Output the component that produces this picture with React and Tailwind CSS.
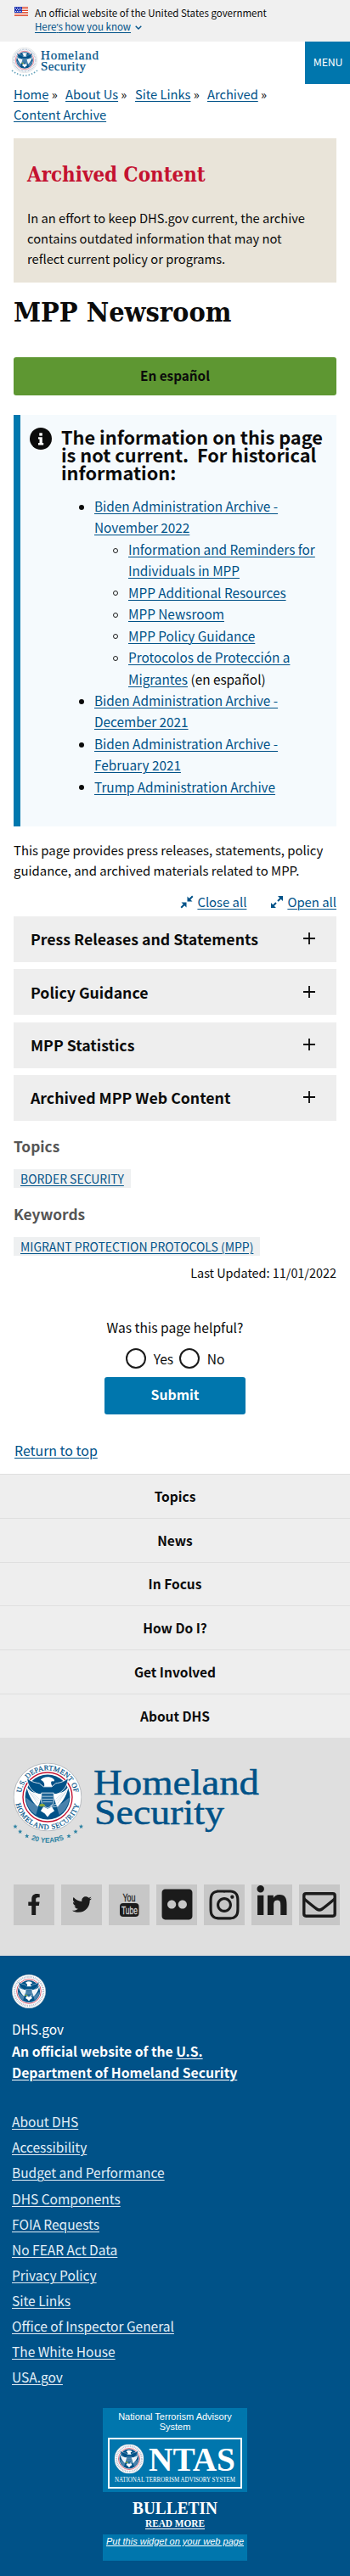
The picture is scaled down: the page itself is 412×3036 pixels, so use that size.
import React from "react";
import { FaFacebookF, FaTwitter, FaFlickr, FaInstagram, FaLinkedinIn } from "react-icons/fa";

const link = "text-[#005288] underline underline-offset-[2px] decoration-1";

function Seal({ className, ringText = true, id }) {
  return (
    <svg viewBox="0 0 100 100" className={className} aria-hidden="true">
      <defs>
        <path id={id + "-ring-top"} d="M 12.3 60 A 39 39 0 1 1 87.7 60" />
        <path id={id + "-ring-bottom"} d="M 3 50 A 47 47 0 0 0 97 50" />
      </defs>
      <circle cx="50" cy="50" r="49.3" fill="#ffffff" stroke="#b4b8bd" strokeWidth="1.2" />
      {ringText ? (
        <g fill="#005288" fontFamily="Liberation Serif, serif" fontSize="10.5" stroke="#005288" strokeWidth="0.25">
          <text letterSpacing="0.2">
            <textPath href={"#" + id + "-ring-top"} startOffset="50%" textAnchor="middle">U.S. DEPARTMENT OF</textPath>
          </text>
          <text letterSpacing="0.8">
            <textPath href={"#" + id + "-ring-bottom"} startOffset="50%" textAnchor="middle">HOMELAND SECURITY</textPath>
          </text>
        </g>
      ) : (
        <circle cx="50" cy="50" r="42.5" fill="none" stroke="#9fb0c6" strokeWidth="6" strokeDasharray="2 2.6" />
      )}
      <circle cx="50" cy="50" r="35.8" fill="#ffffff" stroke="#c41230" strokeWidth="1.7" />
      <circle cx="50" cy="50" r="32.6" fill="#005288" />
      <path d="M18.5 51 C24 54 28 60 37 63 L33 76 C25 71 19 62 18.5 51 Z M81.5 51 C76 54 72 60 63 63 L67 76 C75 71 81 62 81.5 51 Z" fill="#4a82ac" />
      <path d="M20 22 C21 34 27 42 37 46 L63 46 C73 42 79 34 80 22 C74 28 68 29 62 30 L56 35 L44 35 L38 30 C32 29 26 28 20 22 Z" fill="#005288" stroke="#ffffff" strokeWidth="1" />
      <path d="M19 33 C25 45 34 44 42 46 L38 60 L36 64 C31 60 23 52 19 33 Z M81 33 C75 45 66 44 58 46 L62 60 L64 64 C69 60 77 52 81 33 Z" fill="#ffffff" />
      <path d="M24 43 L37 56 M28 44 L38 53 M22 40 L36 60 M76 43 L63 56 M72 44 L62 53 M78 40 L64 60" stroke="#8fb3cd" strokeWidth=".5" />
      <path d="M40 25 C43 20 53 19 58 23 C61 25 60 28 57 27 C54 27 55 31 57 35 L45 35 C46 31 45 27 40 25 Z" fill="#ffffff" />
      <path d="M41 44 H59 V56 C59 61 54 64 50 66 C46 64 41 61 41 56 Z" fill="#1d6497" stroke="#ffffff" strokeWidth="1" />
      <path d="M42 49 H58 M42 53 H58 M43 57 H57" stroke="#b9d2e2" strokeWidth="1.1" />
      <path d="M44 64 L50 67 L56 64 L60 70 L54 74 L50 79 L46 74 L40 70 Z" fill="#ffffff" />
      <path d="M37 62 Q42 57 47 62 Q42 66 37 62 Z" fill="#8aa83c" />
      <path d="M54 63 L66 59 M54 65 L66 63" stroke="#ffffff" strokeWidth=".9" />
    </svg>
  );
}

function Stars({ points, r, fill }) {
  return points.map(([x, y]) => (
    <path
      key={x}
      transform={"translate(" + x + " " + y + ") scale(" + r + ")"}
      d="M0 -1 L0.27 -0.35 L0.95 -0.31 L0.42 0.13 L0.59 0.81 L0 0.44 L-0.59 0.81 L-0.42 0.13 L-0.95 -0.31 L-0.27 -0.35 Z"
      fill={fill}
    />
  ));
}

function Flag() {
  return (
    <svg viewBox="0 0 16 11" className="h-[11px] w-4" aria-hidden="true">
      <rect width="16" height="11" fill="#ffffff" />
      <path d="M0 .5H16M0 2.5H16M0 4.5H16M0 6.5H16M0 8.5H16M0 10.5H16" stroke="#db3e1f" strokeWidth="1" />
      <rect width="9" height="7" fill="#1e33b1" />
      <path d="M1 1.5H8.5M2 3.5H8.5M1 5.5H8.5" stroke="#ffffff" strokeWidth=".9" strokeDasharray="1 1" />
    </svg>
  );
}

function Banner() {
  return (
    <div className="flex h-[49px] gap-2 bg-[#f0f0f0] pl-[17px] pt-[7px] text-[11.5px] leading-4">
      <div className="pt-px"><Flag /></div>
      <div>
        <p>An official website of the United States government</p>
        <p className="flex items-center gap-[5px]">
          <a className="text-[11.5px] text-[#005288] underline underline-offset-[2px]">Here<span className="font-['Open_Sans']">’</span>s how you know</a>
          <svg viewBox="0 0 8 5" className="mt-[2px] h-[5px] w-2"><path d="M.7 .7 4 3.9 7.3 .7" fill="none" stroke="#005288" strokeWidth="1.4" /></svg>
        </p>
      </div>
    </div>
  );
}

function Header() {
  return (
    <header className="flex h-[50px] justify-between">
      <div className="flex pl-[13px] pt-[7px]">
        <svg viewBox="0 0 110 40" className="h-10 w-[110px]">
          <svg x="1" y="0" width="30" height="30"><Seal id="head" ringText={false} /></svg>
          <path d="M1 27 Q16 39 31 27" fill="none" stroke="#5f9fb8" strokeWidth="1.6" strokeDasharray="1.5 2" />
          <g fill="#005288" fontFamily="Liberation Serif, serif" fontSize="15" stroke="#005288" strokeWidth="0.25">
            <text x="35" y="14.3" textLength="68">Homeland</text>
            <text x="35" y="27" textLength="53">Security</text>
          </g>
        </svg>
      </div>
      <button className="h-[50px] w-[53px] bg-[#0076ad] pb-px pl-px text-[12.4px] uppercase tracking-[-0.2px] text-white">Menu</button>
    </header>
  );
}

function Breadcrumb() {
  return (
    <nav className="pl-4 text-[14.7px] leading-6">
      <div className="flex whitespace-nowrap">
        <span className="w-[61px]"><a className={link}>Home</a> »</span>
        <span className="w-[82px]"><a className={link}>About Us</a> »</span>
        <span className="w-[85px]"><a className={link}>Site Links</a> »</span>
        <span><a className={link}>Archived</a> »</span>
      </div>
      <a className={link}>Content Archive</a>
    </nav>
  );
}

function ArchivedNotice() {
  return (
    <section className="mt-4 h-[170px] bg-[#e9e4d9] px-4 pt-7">
      <h2 className="whitespace-nowrap font-['DejaVu_Serif_Condensed','DejaVu_Serif',serif] text-[23.9px] font-bold leading-[30px] text-[#c41230]">Archived Content</h2>
      <p className="mt-6 whitespace-nowrap text-[14.7px] leading-6">
        In an effort to keep DHS.gov current, the archive<br />contains outdated information that may not<br />reflect current policy or programs.
      </p>
    </section>
  );
}

const nested = [
  <a className={link}>Information and Reminders for<br />Individuals in MPP</a>,
  <a className={link}>MPP Additional Resources</a>,
  <a className={link}>MPP Newsroom</a>,
  <a className={link}>MPP Policy Guidance</a>,
  <><a className={link}>Protocolos de Protección a<br />Migrantes</a> (en español)</>,
];

function Item({ hollow, children }) {
  return (
    <li className="flex">
      <span className="flex h-[25.44px] w-[18px] shrink-0 items-center pt-[2px]">
        <i className={hollow ? "h-[6px] w-[6px] rounded-full border border-[#1b1b1b]" : "h-[6px] w-[6px] rounded-full bg-[#0b0b0b]"} />
      </span>
      <div>{children}</div>
    </li>
  );
}

function Alert() {
  return (
    <section className="mt-[23px] h-[485px] border-l-8 border-[#0078ae] bg-[#f5fafd] pl-[11px] pt-[15px]">
      <div className="flex gap-[11px]">
        <svg viewBox="0 0 26 26" className="h-[26px] w-[26px] shrink-0">
          <circle cx="13" cy="13" r="13" fill="#0b0b0b" />
          <rect x="11.3" y="6.3" width="3.5" height="3.3" fill="#fff" />
          <path d="M10 11.2h4.8v6.9h1.4v2.3H10v-2.3h1.5v-4.6H10z" fill="#fff" />
        </svg>
        <h3 className="whitespace-pre text-[21.76px] font-bold leading-[21px]">{"The information on this page\nis not current.  For historical\ninformation:"}</h3>
      </div>
      <ul className="mt-[17px] whitespace-nowrap pl-[58px] text-[15.33px] leading-[25.44px]">
        <Item>
          <a className={link}>Biden Administration Archive -<br />November 2022</a>
          <ul className="pl-[22px]">
            {nested.map((n, i) => <Item key={i} hollow>{n}</Item>)}
          </ul>
        </Item>
        <Item><a className={link}>Biden Administration Archive -<br />December 2021</a></Item>
        <Item><a className={link}>Biden Administration Archive -<br />February 2021</a></Item>
        <Item><a className={link}>Trump Administration Archive</a></Item>
      </ul>
    </section>
  );
}

function AccordionGroup() {
  return (
    <>
      <div className="mt-[13px] flex h-6 justify-end whitespace-nowrap text-[14.85px] leading-6">
        <a className="flex gap-[4px]">
          <svg viewBox="0 0 16 16" className="mt-[4px] h-4 w-4 fill-[#005288] stroke-[#005288]">
            <path d="M8.5 1.5v6h6zM7.5 14.5v-6h-6z" stroke="none" /><path d="M10 6 14.8 1.2M6 10 1.2 14.8" strokeWidth="2" />
          </svg>
          <span className={link}>Close all</span>
        </a>
        <a className="ml-[28px] flex gap-[4px]">
          <svg viewBox="0 0 16 16" className="mt-[4px] h-4 w-4 fill-[#005288] stroke-[#005288]">
            <path d="M9 1h6v6zM1 9v6h6z" stroke="none" /><path d="M9 7 13.5 2.5M7 9 2.5 13.5" strokeWidth="2" />
          </svg>
          <span className={link}>Open all</span>
        </a>
      </div>
      <div className="mt-[5.4px] flex flex-col gap-[8.3px]">
        {["Press Releases and Statements", "Policy Guidance", "MPP Statistics", "Archived MPP Web Content"].map((t) => (
          <button key={t} className="flex h-[54px] items-center justify-between bg-[#eeeeee] pb-px pl-5 pr-[25px] text-[17.69px] font-bold">
            {t}
            <svg viewBox="0 0 14 14" className="h-[14px] w-[14px]"><path d="M7 0v14M0 7h14" stroke="#0b0b0b" strokeWidth="1.8" /></svg>
          </button>
        ))}
      </div>
    </>
  );
}

function Tag({ title, children, className }) {
  return (
    <div className={className}>
      <h4 className="text-[17.3px] font-bold leading-6 text-[#555555]">{title}</h4>
      <div className="mt-[14.5px] flex">
        <span className="flex h-[22px] items-center whitespace-nowrap bg-[#eef0f1] px-2 text-[13.95px] leading-[22px]">
          <a className={link}>{children}</a>
        </span>
      </div>
    </div>
  );
}

function Feedback() {
  return (
    <form className="mt-10 flex flex-col items-center text-[15.6px] leading-6">
      <p>Was this page helpful?</p>
      <div className="mt-[13px] flex h-6">
        <span className="h-6 w-6 rounded-full border-2 border-[#1b1b1b]" />
        <label className="w-[39px] pl-[9px]">Yes</label>
        <span className="h-6 w-6 rounded-full border-2 border-[#1b1b1b]" />
        <label className="pl-[9px]">No</label>
      </div>
      <button type="button" className="mt-[10px] h-11 w-[166px] rounded-[3px] bg-[#0076ad] pb-[2px] text-[15.86px] font-bold text-white">Submit</button>
    </form>
  );
}

function FooterLogo() {
  return (
    <svg viewBox="0 0 300 110" className="h-[110px] w-[300px]">
      <defs><path id="years" d="M14.5 94.5 A 51.5 51.5 0 0 0 73.5 94.5" /></defs>
      <svg x="3.5" y="9.5" width="81" height="81"><Seal id="foot" /></svg>
      <Stars r="2.8" fill="#2d83a3" points={[[6, 84.7], [11.7, 90.7], [19.7, 96], [69, 96], [77, 90.7], [83.5, 84.7]]} />
      <text fill="#2d83a3" fontFamily="Liberation Sans, sans-serif" fontWeight="bold" fontSize="8.3">
        <textPath href="#years" startOffset="50%" textAnchor="middle">20 YEARS</textPath>
      </text>
      <g fill="#005288" fontFamily="Liberation Serif, serif" stroke="#005288" strokeWidth="0.5" fontSize="43">
        <text x="98" y="46.7" textLength="195" lengthAdjust="spacingAndGlyphs">Homeland</text>
        <text x="99" y="82" textLength="153" lengthAdjust="spacingAndGlyphs">Security</text>
      </g>
    </svg>
  );
}

function YouTubeIcon() {
  return (
    <svg viewBox="0 0 24 30" className="h-[30px] w-6">
      <rect x="1" y="13" width="22.5" height="16" rx="4" fill="#1b1b1b" />
      <g fontFamily="Liberation Sans Narrow, Liberation Sans, sans-serif" fontSize="13.5">
        <text x="4.5" y="11.3" textLength="15" lengthAdjust="spacingAndGlyphs" fill="#1b1b1b" stroke="#1b1b1b" strokeWidth=".3">You</text>
        <text x="3" y="25.6" textLength="19" lengthAdjust="spacingAndGlyphs" fill="#d6d6d6" stroke="#d6d6d6" strokeWidth=".3">Tube</text>
      </g>
    </svg>
  );
}

function Social() {
  const icons = [
    <FaFacebookF className="h-[25px] w-[16px]" />,
    <FaTwitter className="h-[23px] w-[23px]" />,
    <YouTubeIcon />,
    <FaFlickr className="h-[41px] w-[41px]" />,
    <FaInstagram className="h-[40px] w-[40px]" />,
    <FaLinkedinIn className="mb-[5px] h-[40px] w-[40px]" />,
    <svg viewBox="0 0 40 30" className="h-[30px] w-10" fill="none" stroke="#1b1b1b" strokeWidth="3.4">
      <rect x="1.8" y="1.8" width="36.4" height="26.4" rx="2.4" /><path d="M2 8 C8 13 14 18 17 20 Q20 22 23 20 C26 18 32 13 38 8" />
    </svg>,
  ];
  return (
    <div className="flex gap-2 pl-4 text-[#1b1b1b]">
      {icons.map((icon, i) => <a key={i} className="flex h-12 w-12 shrink-0 items-center justify-center bg-[#c7c7c7]">{icon}</a>)}
    </div>
  );
}

function Ntas() {
  return (
    <div className="mx-auto mt-[21.6px] w-[170px] text-center font-['Liberation_Sans',Arial,sans-serif] text-[11px] leading-3 text-white">
      <div className="flex h-[99px] flex-col items-center bg-[#0076ad] pt-[4px]">
        <p>National Terrorism Advisory<br />System</p>
        <svg viewBox="0 0 158 60" className="mt-[7px] h-[60px] w-[158px]">
          <rect x="1" y="1" width="156" height="58" fill="none" stroke="#fff" strokeWidth="2" />
          <svg x="7.5" y="7.5" width="35" height="35"><Seal id="ntas" ringText={false} /></svg>
          <g fill="#fff" fontFamily="Liberation Serif, serif">
            <text x="48" y="38.5" fontSize="40" fontWeight="bold" textLength="102" lengthAdjust="spacingAndGlyphs">NTAS</text>
            <text x="8" y="52" fontSize="7.5" textLength="142" lengthAdjust="spacingAndGlyphs">NATIONAL TERRORISM ADVISORY SYSTEM</text>
          </g>
        </svg>
      </div>
      <svg viewBox="0 0 170 50" className="block h-[50px] w-[170px]" fill="#fff" fontFamily="Liberation Serif, serif" fontWeight="bold">
        <text x="35" y="26" fontSize="22" textLength="100" lengthAdjust="spacingAndGlyphs">BULLETIN</text>
        <text x="50" y="41" fontSize="13" textLength="70" lengthAdjust="spacingAndGlyphs">READ MORE</text>
        <path d="M50 43.5H120" stroke="#fff" />
      </svg>
      <p className="h-[31px] whitespace-nowrap bg-[#0076ad] pt-[2px] text-[11px] italic leading-[13px] underline">Put this widget on your web page</p>
    </div>
  );
}

export default function App() {
  return (
    <div className="w-[412px] bg-white font-['Noto_Sans_CJK_SC',sans-serif] text-[#0b0b0b]">
      <Banner />
      <Header />
      <Breadcrumb />
      <main className="px-4">
        <ArchivedNotice />
        <h1 className="mt-[15px] whitespace-nowrap font-['DejaVu_Serif_Condensed','DejaVu_Serif',serif] text-[32.2px] font-bold leading-10">MPP Newsroom</h1>
        <button className="mt-[33px] block h-[45px] w-full rounded-[3px] bg-[#5e9732] pb-[2px] text-[15.3px] font-bold">En español</button>
        <Alert />
        <p className="mt-[15.6px] whitespace-nowrap text-[14.9px] leading-6">This page provides press releases, statements, policy<br />guidance, and archived materials related to MPP.</p>
        <AccordionGroup />
        <Tag className="mt-[18.6px]" title="Topics">BORDER SECURITY</Tag>
        <Tag className="mt-[19.5px]" title="Keywords">MIGRANT PROTECTION PROTOCOLS (MPP)</Tag>
        <p className="mt-[8px] text-right text-[14.42px] leading-6">Last Updated: 11/01/2022</p>
        <Feedback />
        <a className={"mt-[31px] block w-fit pl-px text-[15.9px] leading-6 " + link}>Return to top</a>
      </main>
      <footer>
        <nav className="mt-[15px] h-[311px] bg-[#eeeeee]">
          {["Topics", "News", "In Focus", "How Do I?", "Get Involved", "About DHS"].map((t) => (
            <a key={t} className="flex h-[51.83px] items-center justify-center border-t border-[#dfdfdf] text-[15.5px] font-bold">{t}</a>
          ))}
        </nav>
        <div className="h-[257px] bg-[#dfdfdf]">
          <div className="h-[173px] pl-3 pt-5"><FooterLogo /></div>
          <Social />
        </div>
        <div className="h-[731px] bg-[#005288] pt-[22px] text-white">
          <div className="pl-[14px]">
            <Seal id="small" ringText={false} className="h-10 w-10" />
            <div className="mt-[12.3px] text-[15.4px] leading-[25.44px]">
              <p>DHS.gov</p>
              <p className="text-[15.73px] font-bold">An official website of the <a className="underline underline-offset-[2px]">U.S.<br />Department of Homeland Security</a></p>
            </div>
            <ul className="mt-[29.7px] text-[15.5px] leading-[30.1px] text-[#e3eff7]">
              {["About DHS", "Accessibility", "Budget and Performance", "DHS Components", "FOIA Requests", "No FEAR Act Data", "Privacy Policy", "Site Links", "Office of Inspector General", "The White House", "USA.gov"].map((t) => (
                <li key={t}><a className="underline decoration-1 underline-offset-[2px]">{t}</a></li>
              ))}
            </ul>
          </div>
          <Ntas />
        </div>
      </footer>
    </div>
  );
}
